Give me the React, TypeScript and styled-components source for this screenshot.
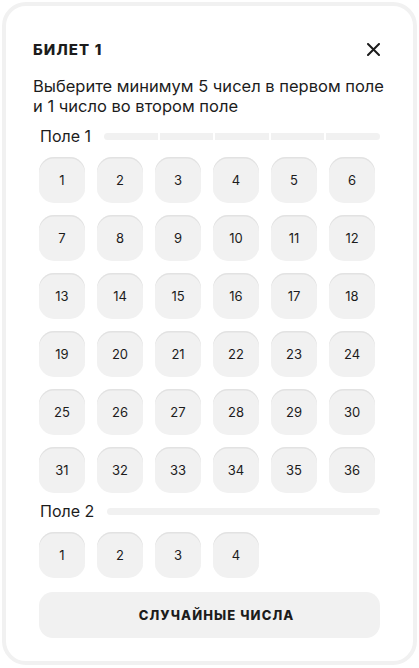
import styled, { createGlobalStyle } from 'styled-components'

const GlobalStyle = createGlobalStyle`
  html, body {
    margin: 0;
    padding: 0;
    background: #ffffff;
  }
  body {
    font-family: Inter, "Noto Sans", sans-serif;
    color: #1c1c1c;
  }
`

const Page = styled.div`
  padding: 2px 2px 3px 2px;
`

const Card = styled.div`
  box-sizing: border-box;
  height: 663px;
  border: 4px solid #f1f1f1;
  border-radius: 24px;
  padding: 33px 33px 0 27px;
  display: flex;
  flex-direction: column;
`

const Header = styled.div`
  display: flex;
  align-items: center;
  justify-content: space-between;
  height: 20px;
`

const Title = styled.h2`
  margin: 0;
  font-size: 15px;
  font-weight: 800;
  letter-spacing: 1.1px;
`

const CloseButton = styled.button`
  border: none;
  background: none;
  padding: 0;
  width: 14px;
  height: 14px;
  display: flex;
  align-items: center;
  justify-content: center;
  color: #1c1c1c;
  cursor: pointer;
`

const Hint = styled.p`
  margin: 17px 0 0 0;
  font-size: 16.5px;
  line-height: 20px;
  white-space: nowrap;
`

const Section = styled.div`
  padding-left: 6px;
  display: flex;
  flex-direction: column;
`

const FieldHead = styled.div<{ $top: number }>`
  display: flex;
  align-items: center;
  gap: 13px;
  margin-top: ${({ $top }) => $top}px;
  height: 20px;
`

const FieldLabel = styled.span`
  font-size: 16px;
  white-space: nowrap;
  padding-left: 1px;
`

const Progress = styled.div`
  flex: 1;
  display: flex;
  gap: 2px;
  height: 7px;
  border-radius: 4px;
  overflow: hidden;
`

const Segment = styled.div`
  flex: 1;
  background: #f1f1f1;
`

const Grid = styled.div`
  display: grid;
  grid-template-columns: repeat(6, 46px);
  gap: 12px;
  margin-top: 11px;
`

const NumberButton = styled.button`
  width: 46px;
  height: 46px;
  border: none;
  border-radius: 15px;
  background: #f1f1f1;
  box-shadow: inset 0 1.5px 0 #e2e2e2;
  font-family: inherit;
  font-size: 13px;
  color: #1c1c1c;
  padding: 0;
  cursor: pointer;
`

const RandomButton = styled.button`
  margin-top: 14px;
  height: 46px;
  border: none;
  border-radius: 14px;
  background: #f1f1f1;
  font-family: inherit;
  font-size: 13px;
  font-weight: 800;
  letter-spacing: 1.1px;
  color: #1c1c1c;
  padding: 0 0 0 14px;
  cursor: pointer;
`

function NumberGrid({ count }: { count: number }) {
  return (
    <Grid>
      {Array.from({ length: count }, (_, i) => (
        <NumberButton key={i}>{i + 1}</NumberButton>
      ))}
    </Grid>
  )
}

export default function App() {
  return (
    <>
      <GlobalStyle />
      <Page>
        <Card>
          <Header>
            <Title>БИЛЕТ 1</Title>
            <CloseButton aria-label="Закрыть">
              <svg width="13" height="13" viewBox="0 0 13 13">
                <path
                  d="M1 1 L12 12 M12 1 L1 12"
                  stroke="currentColor"
                  strokeWidth="2"
                  strokeLinecap="round"
                />
              </svg>
            </CloseButton>
          </Header>
          <Hint>
            Выберите минимум 5 чисел в первом поле
            <br />и 1 число во втором поле
          </Hint>
          <Section>
            <FieldHead $top={10}>
              <FieldLabel>Поле 1</FieldLabel>
              <Progress>
                {[0, 1, 2, 3, 4].map((i) => (
                  <Segment key={i} />
                ))}
              </Progress>
            </FieldHead>
            <NumberGrid count={36} />
            <FieldHead $top={8}>
              <FieldLabel>Поле 2</FieldLabel>
              <Progress>
                <Segment />
              </Progress>
            </FieldHead>
            <NumberGrid count={4} />
            <RandomButton>СЛУЧАЙНЫЕ ЧИСЛА</RandomButton>
          </Section>
        </Card>
      </Page>
    </>
  )
}
